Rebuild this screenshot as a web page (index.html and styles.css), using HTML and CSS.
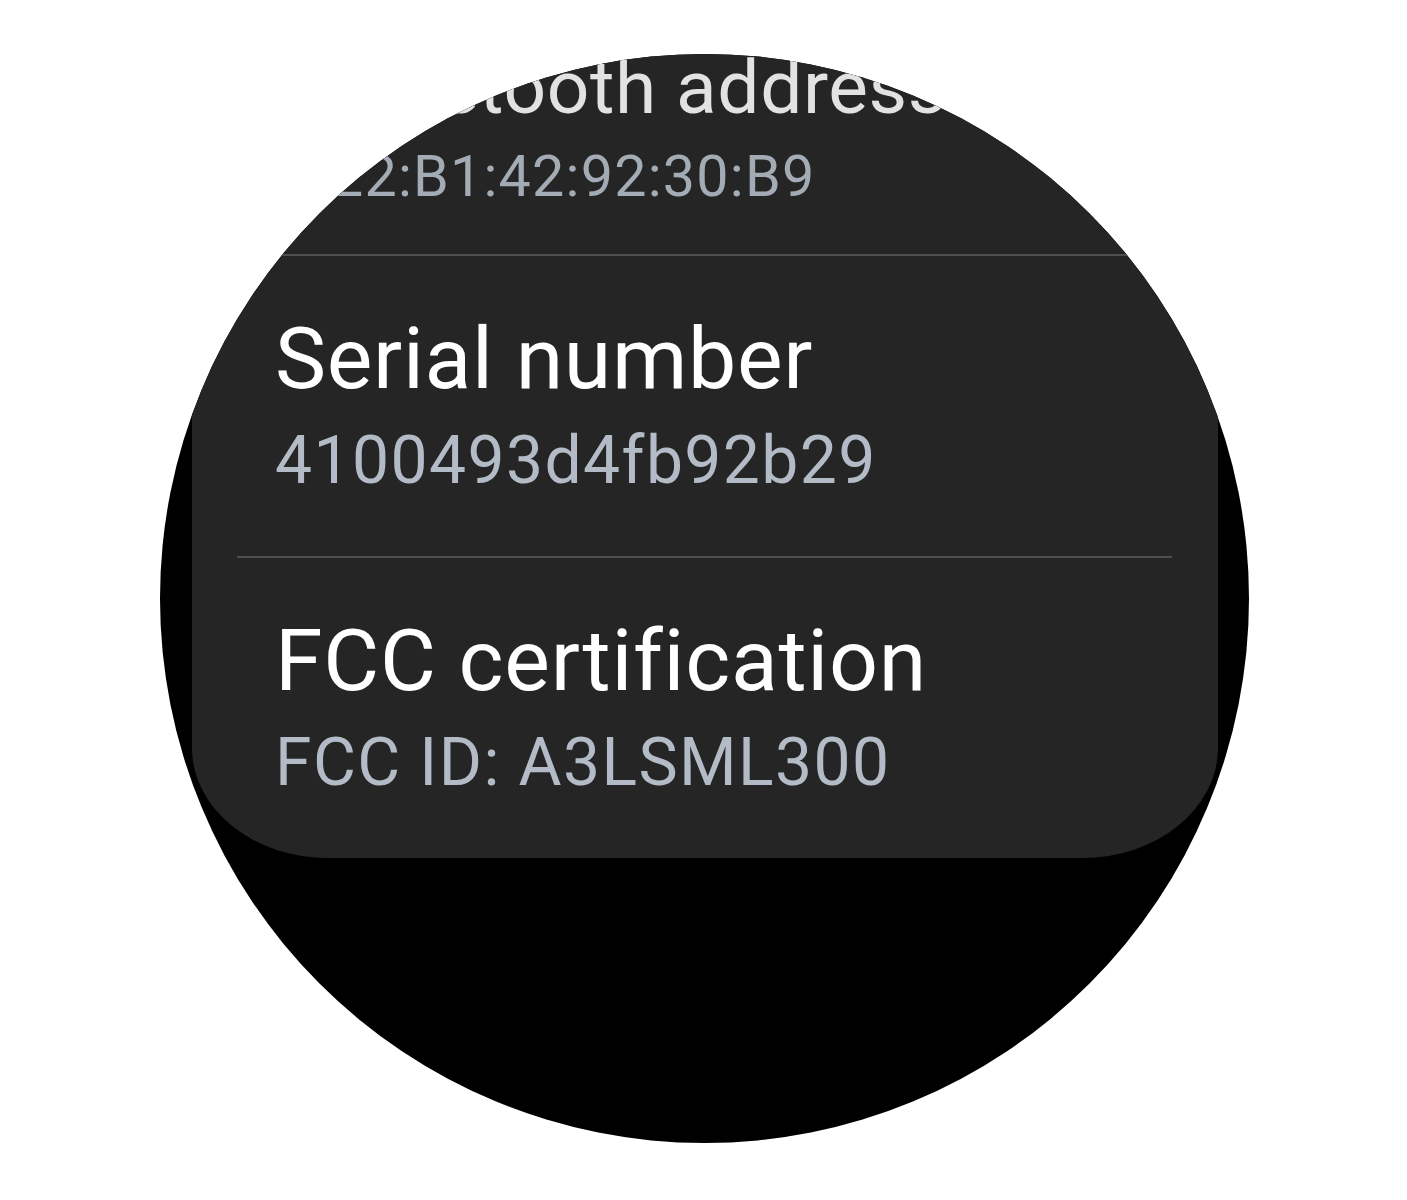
FILE: index.html
```html
<!DOCTYPE html>
<html lang="en">
<head>
<meta charset="utf-8">
<title>About watch</title>
<link rel="stylesheet" href="styles.css">
</head>
<body>
  <div class="watch">
    <div class="card">
      <div class="row row-edge">
        <div class="title">Bluetooth address</div>
        <div class="value">22:B1:42:92:30:B9</div>
      </div>
      <div class="divider"></div>
      <div class="row">
        <div class="title">Serial number</div>
        <div class="value">4100493d4fb92b29</div>
      </div>
      <div class="divider"></div>
      <div class="row">
        <div class="title">FCC certification</div>
        <div class="value">FCC ID: A3LSML300</div>
      </div>
    </div>
  </div>
</body>
</html>
```
FILE: styles.css
```css
html, body {
  margin: 0;
  padding: 0;
  background: #ffffff;
}

body {
  font-family: Roboto, "Liberation Sans", sans-serif;
  width: 1407px;
  height: 1200px;
  overflow: hidden;
}

.watch {
  width: 1089px;
  height: 1089px;
  margin: 54px 0 0 160px;
  border-radius: 50%;
  background: #000000;
  overflow: hidden;
  display: flex;
  flex-direction: column;
}

.card {
  margin: -100px 0 0 32px;
  width: 1026px;
  background: #252525;
  border-radius: 0 0 136px 136px / 0 0 110px 110px;
  display: flex;
  flex-direction: column;
  flex-shrink: 0;
}

.row {
  padding: 53px 0 55px 83px;
  display: flex;
  flex-direction: column;
}

.row-edge {
  transform: translateY(5px) scale(0.87);
  transform-origin: 50% 101%;
}

.title {
  font-size: 86px;
  line-height: 100px;
  letter-spacing: 0.7px;
  color: #ffffff;
  white-space: nowrap;
}

.value {
  font-size: 66px;
  line-height: 80px;
  margin-top: 12px;
  letter-spacing: 1.4px;
  color: #b3bbc6;
  white-space: nowrap;
}

.row-edge .title {
  color: #e2e2e2;
}

.row-edge .value {
  color: #a3abb5;
}

.divider {
  height: 2px;
  margin: 0 46px 0 45px;
  background: #4e4e4e;
}
```
